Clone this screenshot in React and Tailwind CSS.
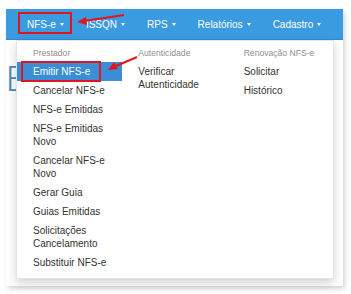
import React from 'react'

const navItems = ['NFS-e', 'ISSQN', 'RPS', 'Relatórios', 'Cadastro']

const prestador = [
  ['Emitir NFS-e'],
  ['Cancelar NFS-e'],
  ['NFS-e Emitidas'],
  ['NFS-e Emitidas', 'Novo'],
  ['Cancelar NFS-e', 'Novo'],
  ['Gerar Guia'],
  ['Guias Emitidas'],
  ['Solicitações', 'Cancelamento'],
  ['Substituir NFS-e'],
]

function Caret() {
  return (
    <span className="inline-block ml-[4px] w-0 h-0 border-t-[3.5px] border-t-current border-x-[2.5px] border-x-transparent align-middle" />
  )
}

function Header({ children }) {
  return <div className="h-[17px] leading-[17px] text-[8.6px] text-[#8e8e8e] pl-[16px]">{children}</div>
}

function Item({ lines, active }) {
  return (
    <div className={'py-[3px] pl-[16px] text-[10px] leading-[13px] ' + (active ? 'bg-[#3a8ed6] text-white' : 'text-[#333]')}>
      {lines.map((l, i) => <div key={i}>{l}</div>)}
    </div>
  )
}

export default function App() {
  return (
    <div className="relative w-[351px] h-[294px] bg-white overflow-hidden" style={{ fontFamily: '"Liberation Sans", Arial, sans-serif' }}>
      <div className="relative ml-[6px] mt-[9px] w-[337px] h-[277px] bg-white shadow-[2px_3px_5px_rgba(0,0,0,0.16)]">
        {/* navbar */}
        <div className="h-[31px] bg-[#3a9be0] border-b border-[#2e8ccf] flex items-center pl-[10px]">
          {navItems.map(n => (
            <div key={n} className="px-[11px] text-[10px] text-white flex items-center">
              {n}<Caret />
            </div>
          ))}
        </div>

        {/* page heading behind the menu */}
        <div className="pt-[22px] text-[35px] leading-[35px] font-light text-[#4f87c2] whitespace-nowrap" style={{ fontFamily: 'Roboto, "Liberation Sans", sans-serif' }}>Emitir NFS-e</div>

        {/* dropdown */}
        <div className="absolute left-[10px] top-[31px] w-[318px] h-[239px] bg-white border border-[rgba(0,0,0,0.1)] shadow-[0_4px_9px_rgba(0,0,0,0.18)] pt-[4px] grid grid-cols-3">
          <div>
            <Header>Prestador</Header>
            {prestador.map((p, i) => <Item key={i} lines={p} active={i === 0} />)}
          </div>
          <div>
            <Header>Autenticidade</Header>
            <Item lines={['Verificar', 'Autenticidade']} />
          </div>
          <div>
            <Header>Renovação NFS-e</Header>
            <Item lines={['Solicitar']} />
            <Item lines={['Histórico']} />
          </div>
        </div>
      </div>

      {/* annotations */}
      <div className="absolute left-[18px] top-[12px] w-[54px] h-[22px] border-2 border-[#e5141b]" />
      <div className="absolute left-[21px] top-[61px] w-[80px] h-[21px] border-2 border-[#e5141b]" />
      <svg className="absolute left-0 top-0" width="351" height="294">
        <line x1="124" y1="15" x2="84" y2="21" stroke="#e5141b" strokeWidth="2" />
        <polygon points="77,22 86,17 87,25" fill="#e5141b" />
        <line x1="137" y1="57" x2="116" y2="66" stroke="#e5141b" strokeWidth="2" />
        <polygon points="108,70 114,62 118,69" fill="#e5141b" />
      </svg>
    </div>
  )
}
